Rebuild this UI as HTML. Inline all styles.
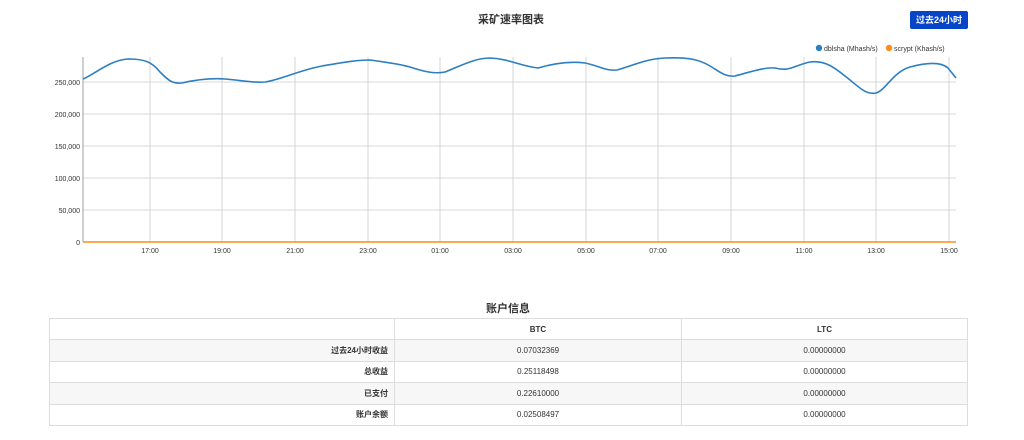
<!DOCTYPE html>
<html><head><meta charset="utf-8"><style>
body{margin:0;width:1024px;height:440px;background:#fff;font-family:"Liberation Sans","Noto Sans CJK SC",sans-serif;color:#333;position:relative;overflow:hidden}
.t{position:absolute;font-weight:bold;font-size:11px}
.btn{position:absolute;left:910px;top:11px;width:58px;height:18px;background:#0645c8;border-radius:2px;color:#fff;font-size:9px;font-weight:bold;text-align:center;line-height:18px}
table{position:absolute;left:49px;top:318px;width:919px;border-collapse:collapse;font-size:8px;border:1px solid #ddd}
td{border:1px solid #ddd;height:20.4px;padding:0 6px}
td:nth-child(1){width:332px;text-align:right;font-weight:bold}
td:nth-child(2){width:274px;text-align:center}
td:nth-child(3){text-align:center}
tr:nth-child(even) td{background:#f7f7f7}
tr:first-child td{font-weight:bold}
</style></head><body>
<div class="t" style="left:478px;top:11px">采矿速率图表</div>
<div class="btn">过去24小时</div>
<svg width="1024" height="270" style="position:absolute;left:0;top:0" font-family="Liberation Sans, sans-serif" font-size="7" fill="#333">
<g stroke="#ccc" stroke-width="0.8">
<line x1="83" y1="82" x2="956" y2="82"/><line x1="83" y1="114" x2="956" y2="114"/><line x1="83" y1="146" x2="956" y2="146"/><line x1="83" y1="178" x2="956" y2="178"/><line x1="83" y1="210" x2="956" y2="210"/>
<line x1="150" y1="57" x2="150" y2="242"/><line x1="222" y1="57" x2="222" y2="242"/><line x1="295" y1="57" x2="295" y2="242"/><line x1="368" y1="57" x2="368" y2="242"/><line x1="440" y1="57" x2="440" y2="242"/><line x1="513" y1="57" x2="513" y2="242"/><line x1="586" y1="57" x2="586" y2="242"/><line x1="658" y1="57" x2="658" y2="242"/><line x1="731" y1="57" x2="731" y2="242"/><line x1="804" y1="57" x2="804" y2="242"/><line x1="876" y1="57" x2="876" y2="242"/><line x1="949" y1="57" x2="949" y2="242"/>
</g>
<line x1="83" y1="57" x2="83" y2="242" stroke="#888" stroke-width="0.8"/>
<g text-anchor="end"><text x="80" y="85">250,000</text><text x="80" y="117">200,000</text><text x="80" y="149">150,000</text><text x="80" y="181">100,000</text><text x="80" y="213">50,000</text><text x="80" y="245">0</text></g>
<g text-anchor="middle"><text x="150" y="253">17:00</text><text x="222" y="253">19:00</text><text x="295" y="253">21:00</text><text x="368" y="253">23:00</text><text x="440" y="253">01:00</text><text x="513" y="253">03:00</text><text x="586" y="253">05:00</text><text x="658" y="253">07:00</text><text x="731" y="253">09:00</text><text x="804" y="253">11:00</text><text x="876" y="253">13:00</text><text x="949" y="253">15:00</text></g>
<path d="M83,79 C95,74 110,60 128,59 C145,59 152,62 160,72 C168,80 172,84 182,83 C195,80 210,78 225,79 C240,80 250,83 265,82 C280,80 300,70 322,66 C340,63 355,60 370,60 C385,62 400,64 410,67 C425,72 435,74 445,72 C460,66 475,58 490,58 C510,59 520,66 538,68 C555,63 570,61 585,63 C600,66 605,71 617,70 C635,65 645,59 665,58 C690,57 700,60 710,66 C720,72 725,77 735,76 C750,72 765,67 775,68 C790,72 795,65 810,62 C825,60 835,68 845,76 C858,86 865,95 876,93 C886,90 893,72 910,67 C925,63 940,61 948,68 L956,78" fill="none" stroke="#2c7fc1" stroke-width="1.6"/>
<line x1="83" y1="242" x2="956" y2="242" stroke="#ff8c1a" stroke-width="1.6"/>
<circle cx="819" cy="48" r="3.2" fill="#2c7fc1"/><text x="824" y="51">dblsha (Mhash/s)</text>
<circle cx="889" cy="48" r="3.2" fill="#ff8c1a"/><text x="894" y="51">scrypt (Khash/s)</text>
</svg>
<div class="t" style="left:486px;top:300px">账户信息</div>
<table>
<tr><td></td><td>BTC</td><td>LTC</td></tr>
<tr><td>过去24小时收益</td><td>0.07032369</td><td>0.00000000</td></tr>
<tr><td>总收益</td><td>0.25118498</td><td>0.00000000</td></tr>
<tr><td>已支付</td><td>0.22610000</td><td>0.00000000</td></tr>
<tr><td>账户余额</td><td>0.02508497</td><td>0.00000000</td></tr>
</table>
</body></html>
